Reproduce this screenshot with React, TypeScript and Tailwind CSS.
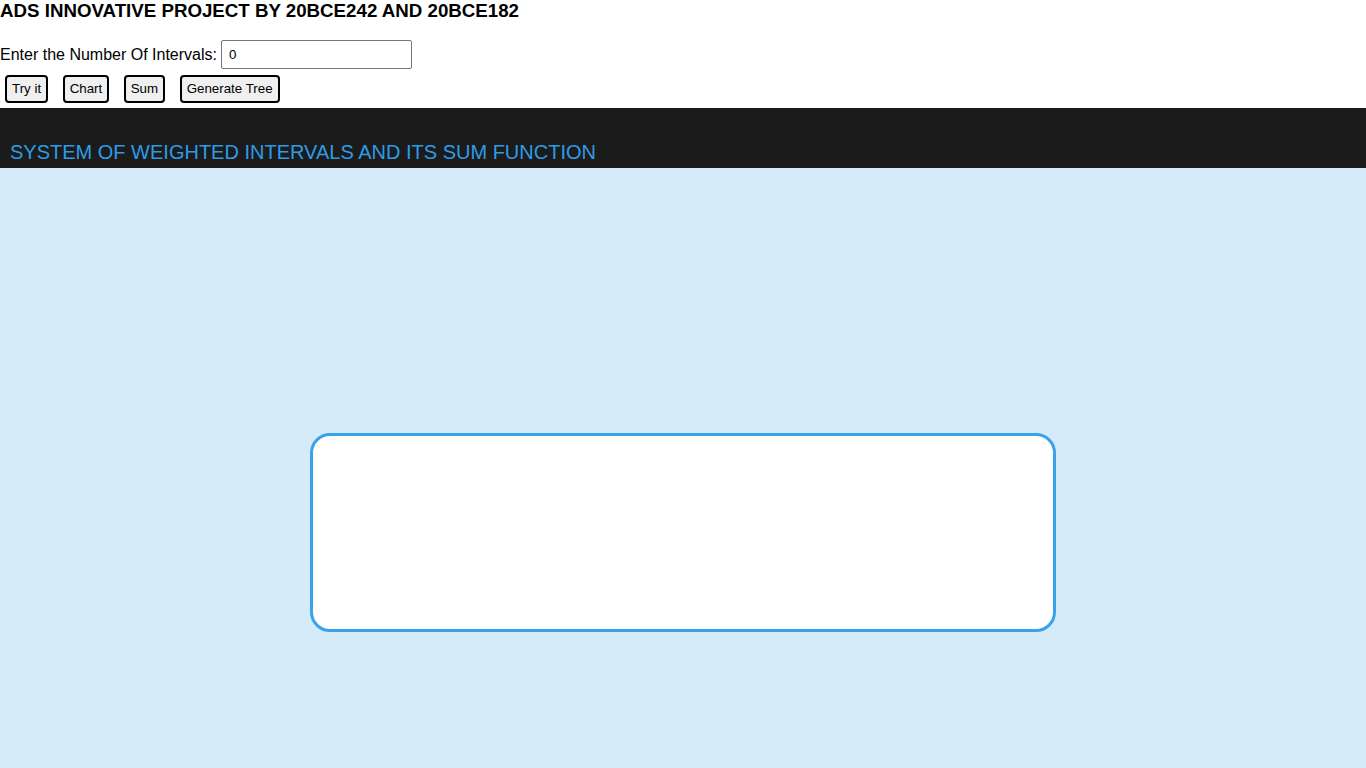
import { useState } from "react";

const BUTTONS = ["Try it", "Chart", "Sum", "Generate Tree"];

export default function App() {
  const [count, setCount] = useState("0");

  return (
    <div className="w-screen bg-white text-black font-['Liberation_Sans',Arial,sans-serif]">
      <h3 className="m-0 text-[18.72px] leading-[22px] font-bold">
        ADS INNOVATIVE PROJECT BY 20BCE242 AND 20BCE182
      </h3>

      <div className="mt-[18px] flex items-center h-[29px] text-[16px]">
        <label htmlFor="intervals">Enter the Number Of Intervals:</label>
        <input
          id="intervals"
          type="text"
          value={count}
          onChange={(e) => setCount(e.target.value)}
          className="ml-[4px] w-[191px] h-[29px] px-[7px] border border-[#767676] rounded-[2px] text-[13.33px] bg-white outline-none"
        />
      </div>

      <div className="mt-[6px] flex gap-[14.5px] pl-[5px]">
        {BUTTONS.map((b) => (
          <button
            key={b}
            className="h-[28px] px-[5px] border-2 border-black rounded-[4px] bg-[#efefef] text-[13.33px] leading-[16px]"
          >
            {b}
          </button>
        ))}
      </div>

      {/* header bar */}
      <div className="mt-[5px] h-[60px] bg-[#1b1b1b] flex items-end px-[10px] pb-[4px]">
        <span className="text-[20px] leading-[23px] text-[#2f9be6]">
          SYSTEM OF WEIGHTED INTERVALS AND ITS SUM FUNCTION
        </span>
      </div>

      <div className="h-[1517px] bg-[#d6ebf9] pt-[265px]">
        <div className="mx-auto w-[746px] h-[199px] bg-white border-[3px] border-[#3aa1ea] rounded-[20px]" />
      </div>
    </div>
  );
}
